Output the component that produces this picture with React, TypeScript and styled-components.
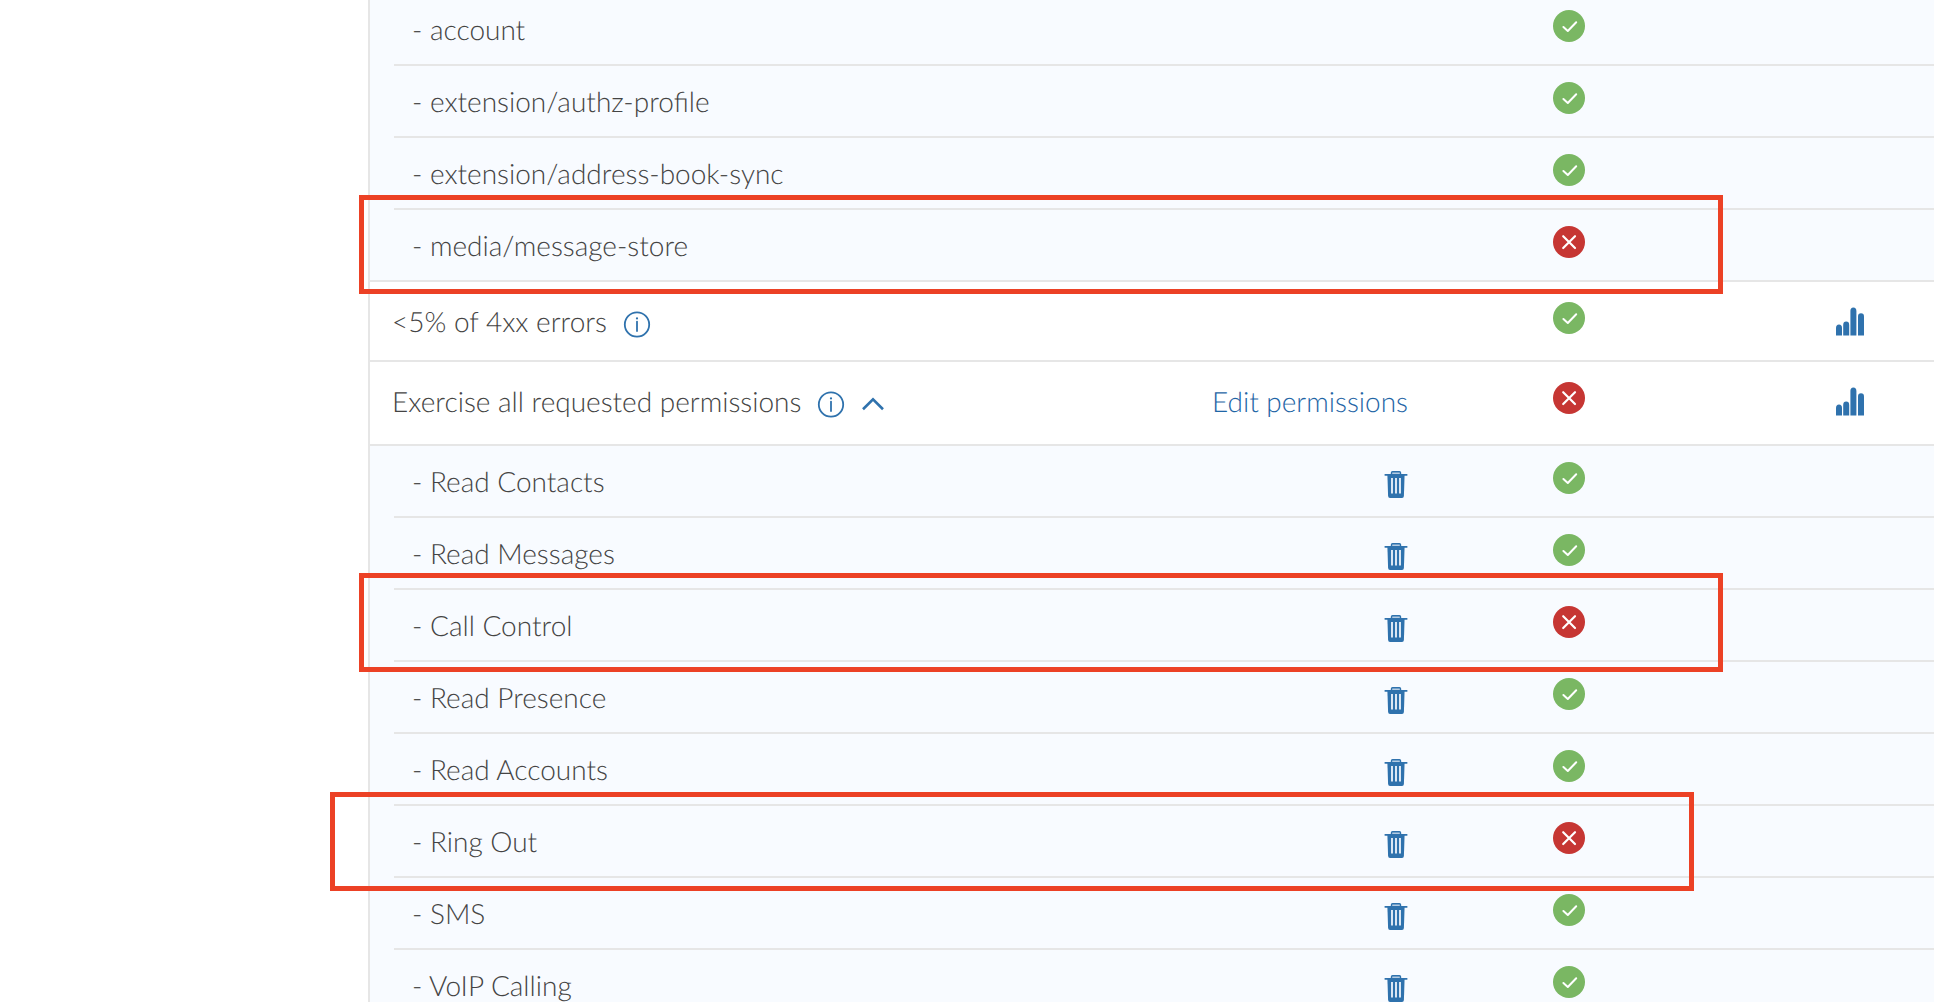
import React from "react";
import styled, { createGlobalStyle } from "styled-components";

const color = {
  text: "#444444",
  blue: "#2f72ad",
  link: "#1f66a6",
  line: "#e6e6e6",
  subRow: "#f8fbff",
  pass: "#7ab763",
  fail: "#c63633",
  highlight: "#ec4125",
};

const GlobalStyle = createGlobalStyle`
  * { box-sizing: border-box; }
  body {
    margin: 0;
    background: #fff;
    color: ${color.text};
    font-family: Lato, "Open Sans", sans-serif;
    font-size: 28px;
    font-weight: 300;
    line-height: 38px;
    text-rendering: geometricPrecision;
  }
`;

const Page = styled.main`
  position: relative;
  height: 100vh;
  overflow: hidden;
  padding-left: 368px;
`;

const Table = styled.table`
  width: 100%;
  margin-top: -6px;
  border-collapse: separate;
  border-spacing: 0;
  border-left: 2px solid ${color.line};
`;

const StatusCol = styled.col`
  width: 322px;
`;

const ChartCol = styled.col`
  width: 204px;
`;

const Cell = styled.td`
  padding: 20px 0;
  border-bottom: 2px solid ${color.line};
  text-align: left;
  vertical-align: top;
  white-space: nowrap;
`;

const NameCell = styled(Cell).attrs({ as: "th", scope: "row" })`
  padding-left: 22px;
  font-weight: 300;
`;

const ActionCell = styled(Cell)`
  text-align: right;
`;

const StatusCell = styled(Cell)`
  text-align: center;
`;

const Row = styled.tr<{ $roomy?: boolean }>`
  ${Cell} {
    padding-bottom: ${(p) => (p.$roomy ? 24 : 20)}px;
  }
`;

const SubRow = styled.tr<{ $last?: boolean }>`
  background: ${color.subRow};

  ${Cell} {
    padding-top: 16px;
    padding-bottom: 16px;
  }

  /* The divider of a nested row is inset from the panel's left edge. */
  ${NameCell} {
    padding-left: 42px;
    border-bottom-color: ${(p) => (p.$last ? color.line : "transparent")};
    background: linear-gradient(${color.line}, ${color.line}) 24px 100% / 100% 2px
      no-repeat border-box;
  }
`;

const NameLine = styled.div`
  display: flex;
  align-items: flex-start;
  height: 38px;
`;

const IconButton = styled.button<{ $gap?: number }>`
  display: inline-flex;
  align-items: flex-start;
  height: 38px;
  margin: 0 0 0 ${(p) => p.$gap ?? 0}px;
  padding: 0;
  border: 0;
  background: none;
  color: ${color.blue};
  vertical-align: top;
  cursor: pointer;
`;

const EditLink = styled.a`
  color: ${color.link};
  text-decoration: none;
`;

const StatusSvg = styled.svg`
  display: inline-block;
  vertical-align: top;
`;

const Highlight = styled.div<{ $left: number; $top: number }>`
  position: absolute;
  left: ${(p) => p.$left}px;
  top: ${(p) => p.$top}px;
  width: 1364px;
  height: 99px;
  border: 5px solid ${color.highlight};
  pointer-events: none;
`;

function StatusIcon({ ok }: { ok: boolean }) {
  return (
    <StatusSvg width="32" height="32" viewBox="0 0 32 32" role="img" aria-label={ok ? "Passed" : "Failed"}>
      <circle cx="16" cy="16" r="16" fill={ok ? color.pass : color.fail} />
      {ok ? (
        <path d="M10.4 17 14.8 21 23.2 12.2" fill="none" stroke="#fff" strokeWidth="2" strokeLinecap="round" strokeLinejoin="round" />
      ) : (
        <path d="M10.2 10.2 22 22M22 10.2 10.2 22" fill="none" stroke="#fff" strokeWidth="2.2" strokeLinecap="round" />
      )}
    </StatusSvg>
  );
}

function InfoButton({ topic }: { topic: string }) {
  return (
    <IconButton type="button" aria-label={`About ${topic}`} $gap={16}>
      <svg width="28" height="38" viewBox="0 0 28 38">
        <circle cx="14" cy="22.5" r="12.2" fill="none" stroke="currentColor" strokeWidth="1.8" />
        <circle cx="14" cy="16.4" r="1.1" fill="currentColor" />
        <path d="M14 19.6V29" fill="none" stroke="currentColor" strokeWidth="1.8" strokeLinecap="round" />
      </svg>
    </IconButton>
  );
}

function CollapseButton() {
  return (
    <IconButton type="button" aria-label="Collapse permissions" aria-expanded="true" $gap={16}>
      <svg width="24" height="38" viewBox="0 0 24 38">
        <path d="M2 27.2 12 17.4 22 27.2" fill="none" stroke="currentColor" strokeWidth="2.6" />
      </svg>
    </IconButton>
  );
}

function DeleteButton({ name }: { name: string }) {
  return (
    <IconButton type="button" aria-label={`Delete ${name}`}>
      <svg width="24" height="38" viewBox="0 0 24 38">
        <path d="M7.5 12V10.8Q7.5 9.8 8.5 9.8H15.5Q16.5 9.8 16.5 10.8V12" fill="#b5cce3" stroke="currentColor" strokeWidth="1.4" />
        <path d="M1.2 12.9H22.8" stroke="currentColor" strokeWidth="1.6" strokeLinecap="round" />
        <path d="M3.4 13H20.6L19.9 34Q19.8 35.9 18 35.9H6Q4.2 35.9 4.1 34Z" fill="currentColor" />
        <path d="M8 16V31.6M12 16V31.6M16 16V31.6" stroke="#e3edf7" strokeWidth="1.9" />
      </svg>
    </IconButton>
  );
}

function ChartButton({ topic }: { topic: string }) {
  return (
    <IconButton type="button" aria-label={`Statistics for ${topic}`} $gap={106}>
      <svg width="28" height="38" viewBox="0 0 28 38" fill="currentColor">
        <path d="M0 33.6V26Q0 22.5 3 22.5T6 26V33.6Z" />
        <path d="M7.2 33.6V23Q7.2 19.6 10.2 19.6T13.2 23V33.6Z" />
        <path d="M14.4 33.6V9Q14.4 5.4 17.4 5.4T20.4 9V33.6Z" />
        <path d="M22 33.6V14.5Q22 11.2 25 11.2T28 14.5V33.6Z" />
      </svg>
    </IconButton>
  );
}

const endpoints = [
  { name: "account", ok: true },
  { name: "extension/authz-profile", ok: true },
  { name: "extension/address-book-sync", ok: true },
  { name: "media/message-store", ok: false },
];

const permissions = [
  { name: "Read Contacts", ok: true },
  { name: "Read Messages", ok: true },
  { name: "Call Control", ok: false },
  { name: "Read Presence", ok: true },
  { name: "Read Accounts", ok: true },
  { name: "Ring Out", ok: false },
  { name: "SMS", ok: true },
  { name: "VoIP Calling", ok: true },
];

const highlights = [
  { left: 359, top: 195 },
  { left: 359, top: 573 },
  { left: 330, top: 792 },
];

export default function App() {
  return (
    <>
      <GlobalStyle />
      <Page>
        <Table>
          <colgroup>
            <col />
            <col />
            <StatusCol />
            <ChartCol />
          </colgroup>
          <tbody>
            {endpoints.map((item, i) => (
              <SubRow key={item.name} $last={i === endpoints.length - 1}>
                <NameCell>- {item.name}</NameCell>
                <ActionCell />
                <StatusCell>
                  <StatusIcon ok={item.ok} />
                </StatusCell>
                <Cell />
              </SubRow>
            ))}
            <Row>
              <NameCell>
                <NameLine>
                  {"<5% of 4xx errors"}
                  <InfoButton topic="4xx errors" />
                </NameLine>
              </NameCell>
              <ActionCell />
              <StatusCell>
                <StatusIcon ok />
              </StatusCell>
              <Cell>
                <ChartButton topic="4xx errors" />
              </Cell>
            </Row>
            <Row $roomy>
              <NameCell>
                <NameLine>
                  Exercise all requested permissions
                  <InfoButton topic="permissions" />
                  <CollapseButton />
                </NameLine>
              </NameCell>
              <ActionCell>
                <EditLink href="#permissions">Edit permissions</EditLink>
              </ActionCell>
              <StatusCell>
                <StatusIcon ok={false} />
              </StatusCell>
              <Cell>
                <ChartButton topic="permissions" />
              </Cell>
            </Row>
            {permissions.map((item) => (
              <SubRow key={item.name}>
                <NameCell>- {item.name}</NameCell>
                <ActionCell>
                  <DeleteButton name={item.name} />
                </ActionCell>
                <StatusCell>
                  <StatusIcon ok={item.ok} />
                </StatusCell>
                <Cell />
              </SubRow>
            ))}
          </tbody>
        </Table>
        {highlights.map((box) => (
          <Highlight key={box.top} $left={box.left} $top={box.top} />
        ))}
      </Page>
    </>
  );
}
